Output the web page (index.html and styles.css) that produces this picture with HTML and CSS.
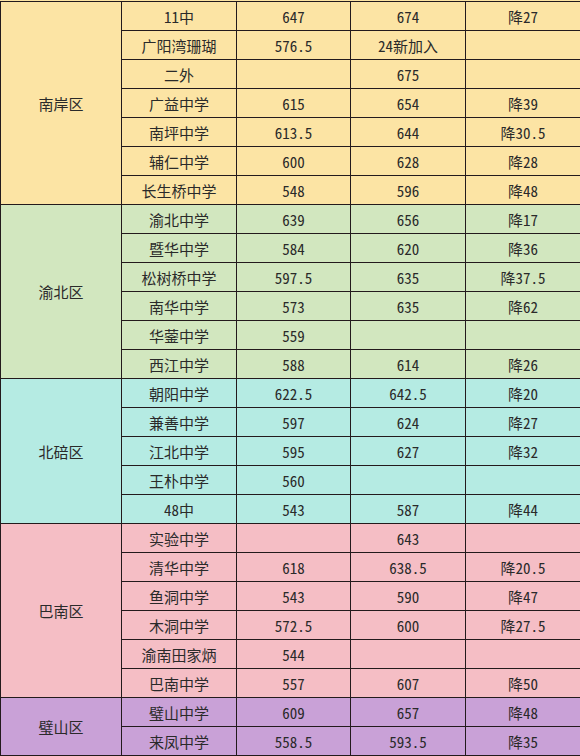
FILE: index.html
```html
<!DOCTYPE html>
<html lang="zh-CN">
<head>
<meta charset="utf-8">
<link rel="stylesheet" href="styles.css">
</head>
<body>
<div class="sheet">
  <div class="c d y r7">南岸区</div>
  <div class="c y">11中</div><div class="c y">647</div><div class="c y">674</div><div class="c y">降27</div>
  <div class="c y">广阳湾珊瑚</div><div class="c y">576.5</div><div class="c y">24新加入</div><div class="c y"></div>
  <div class="c y">二外</div><div class="c y"></div><div class="c y">675</div><div class="c y"></div>
  <div class="c y">广益中学</div><div class="c y">615</div><div class="c y">654</div><div class="c y">降39</div>
  <div class="c y">南坪中学</div><div class="c y">613.5</div><div class="c y">644</div><div class="c y">降30.5</div>
  <div class="c y">辅仁中学</div><div class="c y">600</div><div class="c y">628</div><div class="c y">降28</div>
  <div class="c y">长生桥中学</div><div class="c y">548</div><div class="c y">596</div><div class="c y">降48</div>

  <div class="c d g r6">渝北区</div>
  <div class="c g">渝北中学</div><div class="c g">639</div><div class="c g">656</div><div class="c g">降17</div>
  <div class="c g">暨华中学</div><div class="c g">584</div><div class="c g">620</div><div class="c g">降36</div>
  <div class="c g">松树桥中学</div><div class="c g">597.5</div><div class="c g">635</div><div class="c g">降37.5</div>
  <div class="c g">南华中学</div><div class="c g">573</div><div class="c g">635</div><div class="c g">降62</div>
  <div class="c g">华蓥中学</div><div class="c g">559</div><div class="c g"></div><div class="c g"></div>
  <div class="c g">西江中学</div><div class="c g">588</div><div class="c g">614</div><div class="c g">降26</div>

  <div class="c d b r5">北碚区</div>
  <div class="c b">朝阳中学</div><div class="c b">622.5</div><div class="c b">642.5</div><div class="c b">降20</div>
  <div class="c b">兼善中学</div><div class="c b">597</div><div class="c b">624</div><div class="c b">降27</div>
  <div class="c b">江北中学</div><div class="c b">595</div><div class="c b">627</div><div class="c b">降32</div>
  <div class="c b">王朴中学</div><div class="c b">560</div><div class="c b"></div><div class="c b"></div>
  <div class="c b">48中</div><div class="c b">543</div><div class="c b">587</div><div class="c b">降44</div>

  <div class="c d p r6">巴南区</div>
  <div class="c p">实验中学</div><div class="c p"></div><div class="c p">643</div><div class="c p"></div>
  <div class="c p">清华中学</div><div class="c p">618</div><div class="c p">638.5</div><div class="c p">降20.5</div>
  <div class="c p">鱼洞中学</div><div class="c p">543</div><div class="c p">590</div><div class="c p">降47</div>
  <div class="c p">木洞中学</div><div class="c p">572.5</div><div class="c p">600</div><div class="c p">降27.5</div>
  <div class="c p">渝南田家炳</div><div class="c p">544</div><div class="c p"></div><div class="c p"></div>
  <div class="c p">巴南中学</div><div class="c p">557</div><div class="c p">607</div><div class="c p">降50</div>

  <div class="c d v r2">璧山区</div>
  <div class="c v">璧山中学</div><div class="c v">609</div><div class="c v">657</div><div class="c v">降48</div>
  <div class="c v">来凤中学</div><div class="c v">558.5</div><div class="c v">593.5</div><div class="c v">降35</div>
</div>
</body>
</html>
```

FILE: styles.css
```css
html, body {
  margin: 0;
  padding: 0;
  background: #fce4a4;
  overflow: hidden;
}
.sheet {
  margin-top: 1px;
  width: 581px;
  box-sizing: border-box;
  display: grid;
  grid-template-columns: 120px 114px 113px 114px 114px;
  grid-auto-rows: 28px;
  gap: 1px;
  padding: 1px;
  background: #231a1c;
  font-family: "Noto Sans CJK SC", "Noto Sans", sans-serif;
  font-feature-settings: "hwid" 1;
  font-size: 15px;
  color: #2a2a2a;
}
.c {
  display: flex;
  align-items: center;
  justify-content: center;
  white-space: nowrap;
  line-height: 1;
}
.d { grid-column: 1; }
.r7 { grid-row: span 7; }
.r6 { grid-row: span 6; }
.r5 { grid-row: span 5; }
.r2 { grid-row: span 2; }
.y { background: #fce4a4; }
.g { background: #d2e7bf; }
.b { background: #b5ebe3; }
.p { background: #f5bec5; }
.v { background: #c9a1d7; }
```
